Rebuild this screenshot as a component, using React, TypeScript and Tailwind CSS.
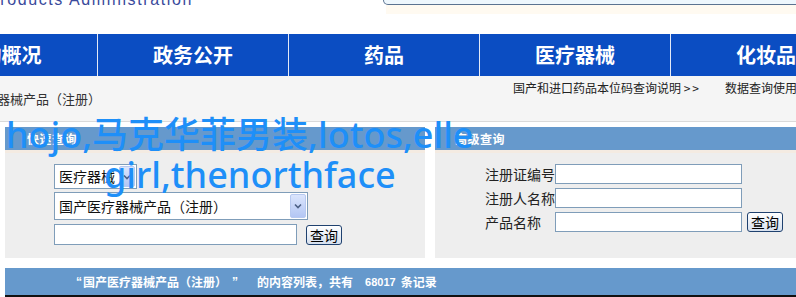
const navItems = ["机构概况", "政务公开", "药品", "医疗器械", "化妆品"];

function ComboArrow() {
  return (
    <div className="m-px flex w-[16px] items-center justify-center rounded-[2px] border border-[#b7c9f0] bg-linear-to-b from-[#dbe5fc] to-[#b3c6f4]">
      <svg width="8" height="6" viewBox="0 0 8 6">
        <path d="M1 1.5 L4 4.5 L7 1.5" fill="none" stroke="#4d6185" strokeWidth="1.6" />
      </svg>
    </div>
  );
}

function XpButton() {
  return (
    <button
      type="button"
      className="h-[20px] w-[36px] rounded-[3px] border border-[#1f416f] bg-linear-to-b from-white to-[#d6e0ee] text-[14px] leading-[16px] text-black"
    >
      查询
    </button>
  );
}

export default function App() {
  return (
    <div className="relative h-[297px] w-[796px] overflow-hidden bg-white font-['Noto_Sans_CJK_SC',sans-serif] text-[#333]">
      {/* banner strip */}
      <div className="flex h-[34px] items-start">
        <div className="-ml-[12px] -mt-[8px] w-[395px] shrink-0 font-['Liberation_Sans',sans-serif] text-[16px] leading-[16px] tracking-[1.6px] text-[#3a4a9c]">
          Products Administration
        </div>
        <div className="flex flex-col">
          <div className="h-[5px] w-[416px] rounded-bl-[10px] border border-t-0 border-[#5b7391] bg-[#eef7fd]" />
          <div className="ml-[3px] h-[9px] w-[413px] bg-[#fffaf1]" />
        </div>
      </div>

      {/* main nav */}
      <div className="flex h-[42px] bg-[#0b4dc2]">
        <div className="-ml-[94px] flex">
          {navItems.map((n, i) => (
            <div
              key={n}
              className={`flex w-[191px] shrink-0 items-center justify-center text-[20px] font-bold text-white ${
                i > 0 ? "border-l border-[#e4eaf7]" : ""
              }`}
            >
              {n}
            </div>
          ))}
        </div>
      </div>

      {/* sub bar */}
      <div className="flex h-[46px] border-b border-[#dadada] bg-[#f5f5f5] whitespace-nowrap">
        <div className="-ml-[29px] mt-[15px] w-[542px] shrink-0 text-[13px] leading-[16px]">医疗器械产品（注册）</div>
        <div className="mt-[5px] flex text-[12px] leading-[14px] text-[#222]">
          <span className="w-[212px] shrink-0">
            国产和进口药品本位码查询说明 <span className="tracking-[2px]">&gt;&gt;</span>
          </span>
          <span>数据查询使用说明</span>
        </div>
      </div>

      {/* query panels */}
      <div className="mt-[5px] flex h-[131px] gap-[10px] pl-[5px]">
        <div className="flex w-[420px] shrink-0 flex-col">
          <div className="flex h-[23px] items-center bg-[#6699cc] pl-[22px] text-[12px] font-bold tracking-[0.5px] text-white">
            快速查询
          </div>
          <div className="h-[3px] bg-[#f4ebe2]" />
          <div className="flex flex-1 flex-col items-start bg-[#eeeeee] pl-[49px] pt-[11px]">
            <div className="flex h-[25px] w-[83px] border border-[#7f9db9] bg-white">
              <span className="flex-1 pl-[4px] text-[14px] leading-[23px] text-[#111]">医疗器械</span>
              <ComboArrow />
            </div>
            <div className="mt-[3px] flex h-[28px] w-[254px] border border-[#7f9db9] bg-white">
              <span className="flex-1 pl-[4px] text-[14px] leading-[26px] text-[#111]">国产医疗器械产品（注册）</span>
              <ComboArrow />
            </div>
            <div className="mt-[4px] flex items-center gap-[9px]">
              <div className="h-[21px] w-[243px] border border-[#7f9db9] bg-white" />
              <XpButton />
            </div>
          </div>
        </div>

        <div className="flex flex-1 flex-col">
          <div className="flex h-[23px] items-center bg-[#6699cc] pl-[20px] text-[12px] font-bold tracking-[0.5px] text-white">
            高级查询
          </div>
          <div className="h-[3px] bg-[#f4ebe2]" />
          <div className="flex flex-1 flex-col gap-[4px] bg-[#eeeeee] pl-[50px] pt-[11px] text-[14px] text-[#222]">
            {["注册证编号", "注册人名称", "产品名称"].map((label, i) => (
              <div key={label} className="flex h-[20px] items-center">
                <span className="w-[70px] shrink-0 leading-[20px]">{label}</span>
                <div className="h-[20px] w-[187px] border border-[#7f9db9] bg-white" />
                {i === 2 && (
                  <div className="ml-[5px]">
                    <XpButton />
                  </div>
                )}
              </div>
            ))}
          </div>
        </div>
      </div>

      {/* result bar */}
      <div className="ml-[5px] mt-[10px] flex h-[29px] items-center border-b-2 border-[#111] bg-[#6699cc] pl-[71px] text-[12px] leading-[14px] font-bold text-white whitespace-nowrap">
        <span className="inline-block w-[7px] font-['Liberation_Sans',sans-serif]">“</span>
        <span>国产医疗器械产品（注册）</span>
        <span className="inline-block w-[16px] text-center font-['Liberation_Sans',sans-serif]">”</span>
        <span className="ml-[14px]">的内容列表，共有</span>
        <span className="ml-[12px] font-['Liberation_Sans',sans-serif] text-[11px]">68017</span>
        <span className="ml-[5px]">条记录</span>
      </div>

      {/* overlay caption */}
      <div className="absolute left-0 top-[115px] whitespace-nowrap font-['Noto_Sans','Noto_Sans_CJK_SC',sans-serif] text-[36px] leading-[40px] font-medium text-[#1e8ff8]">
        <div className="pl-[6px]">hojo,马克华菲男装,lotos,elle</div>
        <div className="pl-[104px]">girl,thenorthface</div>
      </div>
    </div>
  );
}
